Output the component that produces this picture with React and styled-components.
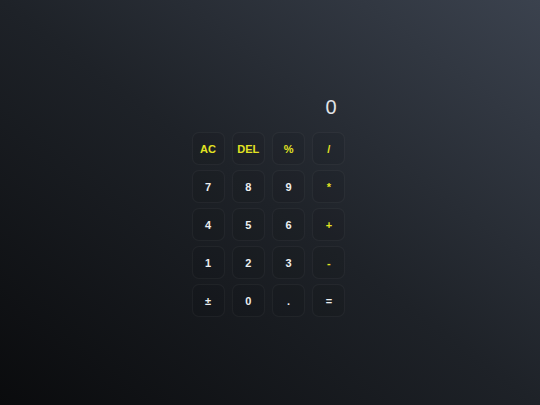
import React from 'react';
import styled, { createGlobalStyle } from 'styled-components';

const GlobalStyle = createGlobalStyle`
  html, body {
    margin: 0;
    padding: 0;
    height: 100%;
  }
  body {
    font-family: "Liberation Sans", Arial, sans-serif;
    background: linear-gradient(to top right, #0a0b0d 0%, #1e2228 50%, #3b424e 100%);
    background-attachment: fixed;
  }
`;

// page wrapper
const Page = styled.div`
  min-height: 100vh;
  display: flex;
  justify-content: center;
  align-items: flex-start;
  padding-top: 93px;
  padding-right: 3px;
  box-sizing: border-box;
`;

const Calculator = styled.div`
  display: flex;
  flex-direction: column;
  width: 154px;
`;

const Display = styled.div`
  height: 28px;
  line-height: 28px;
  margin-bottom: 11px;
  padding-right: 9px;
  text-align: right;
  font-size: 20px;
  font-weight: 400;
  color: #e2e4e7;
`;

const Keypad = styled.div`
  display: grid;
  grid-template-columns: repeat(4, 33px);
  grid-auto-rows: 33px;
  column-gap: 7.3px;
  row-gap: 5px;
`;

const Key = styled.button`
  display: flex;
  align-items: center;
  justify-content: center;
  padding: 0;
  border: 1px solid rgba(255, 255, 255, 0.045);
  border-radius: 7px;
  background: rgba(0, 0, 0, 0.06);
  color: ${(p) => (p.$accent ? '#e3e322' : '#eceef0')};
  font-family: "Liberation Sans", Arial, sans-serif;
  font-size: 11px;
  font-weight: 700;
  cursor: pointer;
`;

const keys = [
  { label: 'AC', accent: true },
  { label: 'DEL', accent: true },
  { label: '%', accent: true },
  { label: '/', accent: true },
  { label: '7' },
  { label: '8' },
  { label: '9' },
  { label: '*', accent: true },
  { label: '4' },
  { label: '5' },
  { label: '6' },
  { label: '+', accent: true },
  { label: '1' },
  { label: '2' },
  { label: '3' },
  { label: '-', accent: true },
  { label: '±' },
  { label: '0' },
  { label: '.' },
  { label: '=' },
];

const App = () => {
  return (
    <>
      <GlobalStyle />
      <Page>
        <Calculator>
          <Display>0</Display>
          <Keypad>
            {keys.map((k) => (
              <Key key={k.label} $accent={k.accent}>
                {k.label}
              </Key>
            ))}
          </Keypad>
        </Calculator>
      </Page>
    </>
  );
};

export default App;
